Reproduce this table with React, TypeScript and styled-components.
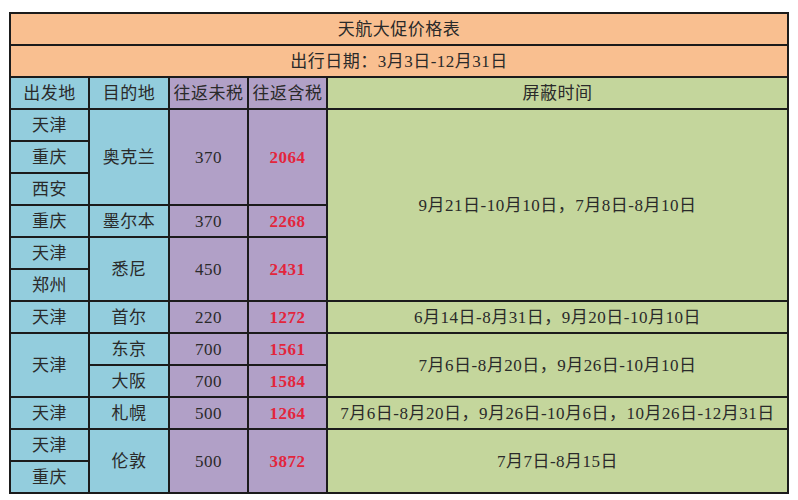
import styled, { createGlobalStyle } from 'styled-components';

const GlobalStyle = createGlobalStyle`
  html, body {
    margin: 0;
    padding: 0;
    background: #ffffff;
  }
  body {
    font-family: "Liberation Serif", "Noto Sans CJK SC", serif;
  }
`;

const Page = styled.div`
  width: 798px;
  height: 500px;
  padding: 12px 0 0 9px;
  box-sizing: border-box;
`;

const PriceTable = styled.table`
  width: 778px;
  table-layout: fixed;
  border-collapse: collapse;
  font-size: 17px;
  letter-spacing: 0.5px;
  color: #2a2a2a;

  & td {
    height: 28px;
    padding: 2px 0 0;
    text-align: center;
    vertical-align: middle;
    border: 2px solid #1b1b1b;
    white-space: nowrap;
    line-height: 20px;
  }
`;

type Tone = 'orange' | 'blue' | 'purple' | 'green';

const fills: Record<Tone, string> = {
  orange: '#f9bf90',
  blue: '#93cddd',
  purple: '#b1a0c7',
  green: '#c4d69c',
};

const Cell = styled.td<{ $tone: Tone }>`
  background: ${(p) => fills[p.$tone]};
`;

const Price = styled(Cell)`
  color: #e3253c;
  font-weight: bold;
`;

const Col = styled.col<{ $w: number }>`
  width: ${(p) => p.$w}px;
`;

export default function App(): JSX.Element {
  return (
    <Page>
      <GlobalStyle />
      <PriceTable>
        <colgroup>
          <Col $w={79} />
          <Col $w={80} />
          <Col $w={79} />
          <Col $w={79} />
          <Col $w={461} />
        </colgroup>
        <tbody>
          <tr>
            <Cell $tone="orange" colSpan={5}>天航大促价格表</Cell>
          </tr>
          <tr>
            <Cell $tone="orange" colSpan={5}>出行日期：3月3日-12月31日</Cell>
          </tr>
          <tr>
            <Cell $tone="blue">出发地</Cell>
            <Cell $tone="blue">目的地</Cell>
            <Cell $tone="purple">往返未税</Cell>
            <Cell $tone="purple">往返含税</Cell>
            <Cell $tone="green">屏蔽时间</Cell>
          </tr>
          <tr>
            <Cell $tone="blue">天津</Cell>
            <Cell $tone="blue" rowSpan={3}>奥克兰</Cell>
            <Cell $tone="purple" rowSpan={3}>370</Cell>
            <Price $tone="purple" rowSpan={3}>2064</Price>
            <Cell $tone="green" rowSpan={6}>9月21日-10月10日，7月8日-8月10日</Cell>
          </tr>
          <tr>
            <Cell $tone="blue">重庆</Cell>
          </tr>
          <tr>
            <Cell $tone="blue">西安</Cell>
          </tr>
          <tr>
            <Cell $tone="blue">重庆</Cell>
            <Cell $tone="blue">墨尔本</Cell>
            <Cell $tone="purple">370</Cell>
            <Price $tone="purple">2268</Price>
          </tr>
          <tr>
            <Cell $tone="blue">天津</Cell>
            <Cell $tone="blue" rowSpan={2}>悉尼</Cell>
            <Cell $tone="purple" rowSpan={2}>450</Cell>
            <Price $tone="purple" rowSpan={2}>2431</Price>
          </tr>
          <tr>
            <Cell $tone="blue">郑州</Cell>
          </tr>
          <tr>
            <Cell $tone="blue">天津</Cell>
            <Cell $tone="blue">首尔</Cell>
            <Cell $tone="purple">220</Cell>
            <Price $tone="purple">1272</Price>
            <Cell $tone="green">6月14日-8月31日，9月20日-10月10日</Cell>
          </tr>
          <tr>
            <Cell $tone="blue" rowSpan={2}>天津</Cell>
            <Cell $tone="blue">东京</Cell>
            <Cell $tone="purple">700</Cell>
            <Price $tone="purple">1561</Price>
            <Cell $tone="green" rowSpan={2}>7月6日-8月20日，9月26日-10月10日</Cell>
          </tr>
          <tr>
            <Cell $tone="blue">大阪</Cell>
            <Cell $tone="purple">700</Cell>
            <Price $tone="purple">1584</Price>
          </tr>
          <tr>
            <Cell $tone="blue">天津</Cell>
            <Cell $tone="blue">札幌</Cell>
            <Cell $tone="purple">500</Cell>
            <Price $tone="purple">1264</Price>
            <Cell $tone="green">7月6日-8月20日，9月26日-10月6日，10月26日-12月31日</Cell>
          </tr>
          <tr>
            <Cell $tone="blue">天津</Cell>
            <Cell $tone="blue" rowSpan={2}>伦敦</Cell>
            <Cell $tone="purple" rowSpan={2}>500</Cell>
            <Price $tone="purple" rowSpan={2}>3872</Price>
            <Cell $tone="green" rowSpan={2}>7月7日-8月15日</Cell>
          </tr>
          <tr>
            <Cell $tone="blue">重庆</Cell>
          </tr>
        </tbody>
      </PriceTable>
    </Page>
  );
}
